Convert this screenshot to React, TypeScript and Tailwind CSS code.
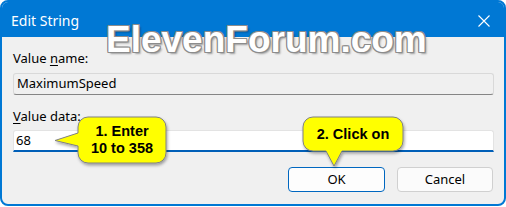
import React from "react";

export default function App() {
  return (
    <div className="relative w-[506px] h-[207px] bg-white overflow-hidden">
      {/* Window */}
      <div className="w-[506px] h-[206px] border-2 border-[#0078d4] rounded-[8px] bg-[#f0f0f0] flex flex-col overflow-hidden font-['Noto_Sans',sans-serif] text-black">
        {/* Title bar */}
        <div className="h-[35px] bg-[#0078d4] flex items-center justify-between pl-[9px] pr-[14px] shrink-0">
          <span className="text-[14px] text-white leading-none pt-[2px]">Edit String</span>
          <svg width="12" height="12" viewBox="0 0 12 12" className="mt-[2px]">
            <path d="M0.5 0.5 L11.5 11.5 M11.5 0.5 L0.5 11.5" stroke="#ffffff" strokeWidth="1.1" fill="none" />
          </svg>
        </div>
        {/* Body */}
        <div className="flex flex-col pl-[11px] pr-[10px] pt-[12px]">
          <div className="h-[18px] leading-[18px] text-[13px]">
            Value <span className="underline underline-offset-2">n</span>ame:
          </div>
          <div className="mt-[6px] h-[22px] border border-[#d9d9d9] border-b-[#858585] rounded-[3px] bg-[#f0f0f0] flex items-center pl-[3px] text-[13px]">
            MaximumSpeed
          </div>
          <div className="mt-[12px] h-[18px] leading-[18px] text-[13px]">
            <span className="underline underline-offset-2">V</span>alue data:
          </div>
          <div className="mt-[5px] h-[22px] border border-[#e3e3e3] border-b-2 border-b-[#005fb8] rounded-t-[3px] bg-white flex items-center pl-[2px] pt-[1px] text-[13px]">
            68
          </div>
          <div className="mt-[15px] flex justify-end gap-[12px] pr-[1px]">
            <div className="w-[97px] h-[25px] border border-[#0067c0] rounded-[4px] bg-[#fdfdfd] flex items-center justify-center text-[13px]">
              OK
            </div>
            <div className="w-[96px] h-[25px] border border-[#d0d0d0] rounded-[4px] bg-[#fbfbfb] flex items-center justify-center text-[13px]">
              Cancel
            </div>
          </div>
        </div>
      </div>

      {/* Watermark */}
      <div className="absolute left-[106px] top-[21px] text-[37px] leading-none font-bold font-['Liberation_Sans',Arial,sans-serif] text-white whitespace-nowrap pointer-events-none [text-shadow:-1px_-1px_0_#8c8c8c,1px_-1px_0_#8c8c8c,-1px_1px_0_#8c8c8c,1px_1px_0_#8c8c8c,0_1px_0_#8c8c8c,1px_0_0_#8c8c8c,-1px_0_0_#8c8c8c,0_-1px_0_#8c8c8c,2px_2px_2px_rgba(0,0,0,0.35)]">
        ElevenForum.com
      </div>

      {/* Callout shapes */}
      <svg className="absolute left-0 top-0 pointer-events-none" width="506" height="207" viewBox="0 0 506 207">
        <defs>
          <filter id="sh" x="-20%" y="-20%" width="140%" height="150%">
            <feDropShadow dx="1" dy="2" stdDeviation="1.5" floodColor="#000" floodOpacity="0.35" />
          </filter>
        </defs>
        <path
          d="M88 117 H156 A10 10 0 0 1 166 127 V153 A10 10 0 0 1 156 163 H88 A10 10 0 0 1 78 153 V146 L55 140.5 L78 133 V127 A10 10 0 0 1 88 117 Z"
          fill="#ffff00"
          stroke="#808080"
          strokeWidth="1"
          filter="url(#sh)"
        />
        <path
          d="M313 117 H393 A10 10 0 0 1 403 127 V141 A10 10 0 0 1 393 151 H342 L334 166 L326 151 H313 A10 10 0 0 1 303 141 V127 A10 10 0 0 1 313 117 Z"
          fill="#ffff00"
          stroke="#808080"
          strokeWidth="1"
          filter="url(#sh)"
        />
      </svg>

      {/* Callout texts */}
      <div className="absolute left-[78px] top-[117px] w-[88px] h-[46px] flex flex-col items-center justify-center font-['Liberation_Sans',Arial,sans-serif] font-bold text-[14.5px] leading-[17px] text-black">
        <span>1. Enter</span>
        <span>10 to 358</span>
      </div>
      <div className="absolute left-[303px] top-[117px] w-[100px] h-[34px] flex items-center justify-center font-['Liberation_Sans',Arial,sans-serif] font-bold text-[14.5px] leading-[17px] text-black">
        2. Click on
      </div>
    </div>
  );
}
